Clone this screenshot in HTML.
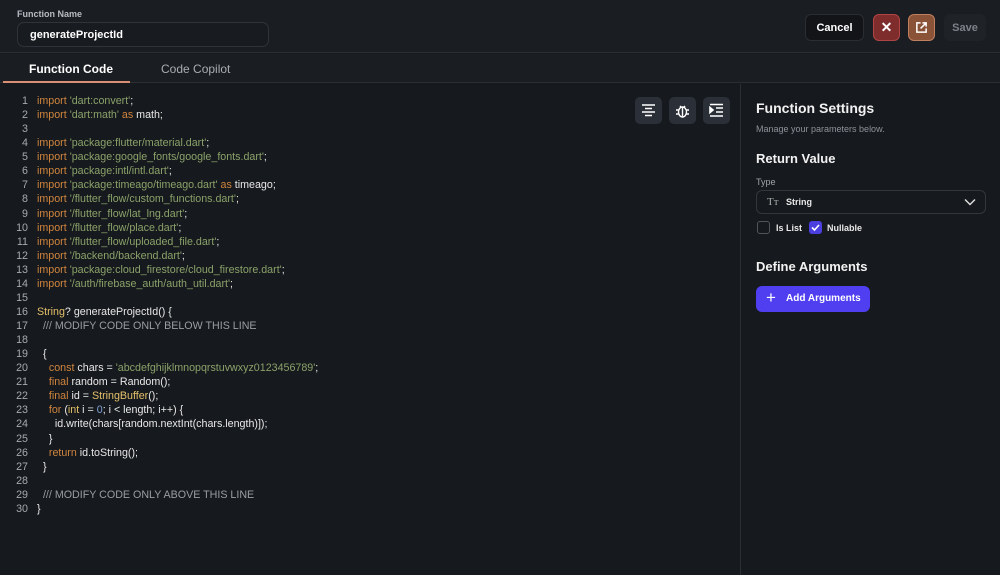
<!DOCTYPE html>
<html><head><style>
*{box-sizing:border-box;margin:0;padding:0}
body{width:1000px;height:575px;background:#16191d;font-family:"Liberation Sans",sans-serif;color:#e8e8e8;position:relative;overflow:hidden}
.top{position:absolute;left:0;top:0;width:1000px;height:53px;background:#1a1d21;border-bottom:1px solid #2b2f34}
.lbl{position:absolute;left:17px;top:9px;font-size:9px;color:#b8bcc2;font-weight:bold}
.name{position:absolute;left:17px;top:22px;width:252px;height:25px;border:1px solid #30343a;border-radius:7px;background:#181b1f;font-size:11px;font-weight:bold;padding:6px 12px;color:#fff}
.btn{position:absolute;top:14px;height:27px;border-radius:6px;font-size:11px;font-weight:bold;display:flex;align-items:center;justify-content:center}
.tabs{position:absolute;left:0;top:54px;width:1000px;height:29px;background:#1a1d21;border-bottom:1px solid #2b2f34}
.tab{position:absolute;top:8px;font-size:12px;font-weight:bold}
.code{position:absolute;left:0;top:94px;font-size:10.7px;line-height:14.07px;white-space:pre;font-family:"Liberation Sans",sans-serif}
.ln{display:inline-block;width:37px;text-align:right;color:#a7aab0;padding-right:9px}
.k{color:#d0853e}.s{color:#8ba26a}.y{color:#e3c06a}.c{color:#9a9da3}.n{color:#7fa3d6}
.ib{position:absolute;top:97px;width:27px;height:27px;background:#2b3038;border-radius:5px}
.side{position:absolute;left:740px;top:84px;width:1px;height:491px;background:#2b2f34}
.h{position:absolute;left:756px;font-size:14px;font-weight:bold;color:#f2f2f2}
</style></head><body>
<div class="top">
<div class="lbl">Function Name</div>
<div class="name">generateProjectId</div>
<div class="btn" style="left:805px;width:59px;background:#121418;border:1px solid #2a2d32;color:#fff">Cancel</div>
<div class="btn" style="left:873px;width:27px;background:#7f2c2c;border:1px solid #b04545;color:#fff;font-size:14px">✕</div>
<div class="btn" style="left:908px;width:27px;background:#8a5237;border:1px solid #c08060">
<svg width="13" height="13" viewBox="0 0 14 14" fill="none" stroke="#fff" stroke-width="1.6"><path d="M6 2H2v10h10V8M8 2h4v4M12 2L6 8"/></svg></div>
<div class="btn" style="left:944px;width:42px;background:#1f2328;color:#7d8289">Save</div>
</div>
<div class="tabs">
<div class="tab" style="left:29px;color:#fff">Function Code</div>
<div class="tab" style="left:161px;color:#a9adb3;font-weight:normal">Code Copilot</div>
<div style="position:absolute;left:3px;top:27px;width:127px;height:2px;background:#d88f74"></div>
</div>
<div class="code"><span class="ln">1</span><span class="k">import</span> <span class="s">'dart:convert'</span>;
<span class="ln">2</span><span class="k">import</span> <span class="s">'dart:math'</span> <span class="k">as</span> math;
<span class="ln">3</span>
<span class="ln">4</span><span class="k">import</span> <span class="s">'package:flutter/material.dart'</span>;
<span class="ln">5</span><span class="k">import</span> <span class="s">'package:google_fonts/google_fonts.dart'</span>;
<span class="ln">6</span><span class="k">import</span> <span class="s">'package:intl/intl.dart'</span>;
<span class="ln">7</span><span class="k">import</span> <span class="s">'package:timeago/timeago.dart'</span> <span class="k">as</span> timeago;
<span class="ln">8</span><span class="k">import</span> <span class="s">'/flutter_flow/custom_functions.dart'</span>;
<span class="ln">9</span><span class="k">import</span> <span class="s">'/flutter_flow/lat_lng.dart'</span>;
<span class="ln">10</span><span class="k">import</span> <span class="s">'/flutter_flow/place.dart'</span>;
<span class="ln">11</span><span class="k">import</span> <span class="s">'/flutter_flow/uploaded_file.dart'</span>;
<span class="ln">12</span><span class="k">import</span> <span class="s">'/backend/backend.dart'</span>;
<span class="ln">13</span><span class="k">import</span> <span class="s">'package:cloud_firestore/cloud_firestore.dart'</span>;
<span class="ln">14</span><span class="k">import</span> <span class="s">'/auth/firebase_auth/auth_util.dart'</span>;
<span class="ln">15</span>
<span class="ln">16</span><span class="y">String</span>? generateProjectId() {
<span class="ln">17</span>  <span class="c">/// MODIFY CODE ONLY BELOW THIS LINE</span>
<span class="ln">18</span>
<span class="ln">19</span>  {
<span class="ln">20</span>    <span class="k">const</span> chars = <span class="s">'abcdefghijklmnopqrstuvwxyz0123456789'</span>;
<span class="ln">21</span>    <span class="k">final</span> random = Random();
<span class="ln">22</span>    <span class="k">final</span> id = <span class="y">StringBuffer</span>();
<span class="ln">23</span>    <span class="k">for</span> (<span class="y">int</span> i = <span class="n">0</span>; i &lt; length; i++) {
<span class="ln">24</span>      id.write(chars[random.nextInt(chars.length)]);
<span class="ln">25</span>    }
<span class="ln">26</span>    <span class="k">return</span> id.toString();
<span class="ln">27</span>  }
<span class="ln">28</span>
<span class="ln">29</span>  <span class="c">/// MODIFY CODE ONLY ABOVE THIS LINE</span>
<span class="ln">30</span>}</div>
<div class="ib" style="left:635px"><svg width="27" height="27" viewBox="0 0 27 27" stroke="#fff" stroke-width="1.6"><path d="M7 8h13M10 11.5h7M7 15h13M10 18.5h7"/></svg></div>
<div class="ib" style="left:669px"><svg width="27" height="27" viewBox="0 0 27 27" fill="none" stroke="#fff" stroke-width="1.4"><ellipse cx="13.5" cy="15" rx="4" ry="5"/><path d="M11 9l1.5 1.5M16 9l-1.5 1.5M13.5 10v10M9.5 13H7M9.5 17H7M17.5 13H20M17.5 17H20"/></svg></div>
<div class="ib" style="left:703px"><svg width="27" height="27" viewBox="0 0 27 27" fill="none" stroke="#fff" stroke-width="1.6"><path d="M7 7.5h13M13 11h7M13 15h7M7 19h13"/><path d="M7 10.5l3 2.5-3 2.5z" fill="#fff"/></svg></div>
<div class="side"></div>
<div class="h" style="top:100px">Function Settings</div>
<div style="position:absolute;left:756px;top:124px;font-size:9px;color:#8e939a">Manage your parameters below.</div>
<div class="h" style="top:151px;font-size:13px">Return Value</div>
<div style="position:absolute;left:756px;top:177px;font-size:9px;color:#a0a4aa">Type</div>
<div style="position:absolute;left:756px;top:190px;width:230px;height:24px;border:1px solid #33373d;border-radius:6px;background:#16191d">
<span style="position:absolute;left:10px;top:5px;font-size:11px;color:#aaa;font-family:'Liberation Serif',serif">Tт</span>
<span style="position:absolute;left:29px;top:6px;font-size:9px;font-weight:bold">String</span>
<svg style="position:absolute;right:9px;top:7px" width="12" height="8" viewBox="0 0 12 8" fill="none" stroke="#ddd" stroke-width="1.5"><path d="M1 1.5l5 5 5-5"/></svg></div>
<div style="position:absolute;left:757px;top:221px;width:13px;height:13px;border:1px solid #50555c;border-radius:3px"></div>
<div style="position:absolute;left:776px;top:223px;font-size:9px;font-weight:bold">Is List</div>
<div style="position:absolute;left:809px;top:221px;width:13px;height:13px;background:#4b3fe0;border-radius:3px"><svg width="13" height="13" viewBox="0 0 13 13" fill="none" stroke="#fff" stroke-width="1.6"><path d="M3 6.5l2.5 2.5 4.5-5"/></svg></div>
<div style="position:absolute;left:827px;top:223px;font-size:9px;font-weight:bold">Nullable</div>
<div class="h" style="top:259px;font-size:13px">Define Arguments</div>
<div style="position:absolute;left:756px;top:286px;width:114px;height:26px;background:#4f3ff0;border-radius:6px;font-size:10px;font-weight:bold;color:#fff;padding:7px 0 0 30px">Add Arguments<span style="position:absolute;left:10px;top:2px;font-size:17px;font-weight:normal">+</span></div>
</body></html>
